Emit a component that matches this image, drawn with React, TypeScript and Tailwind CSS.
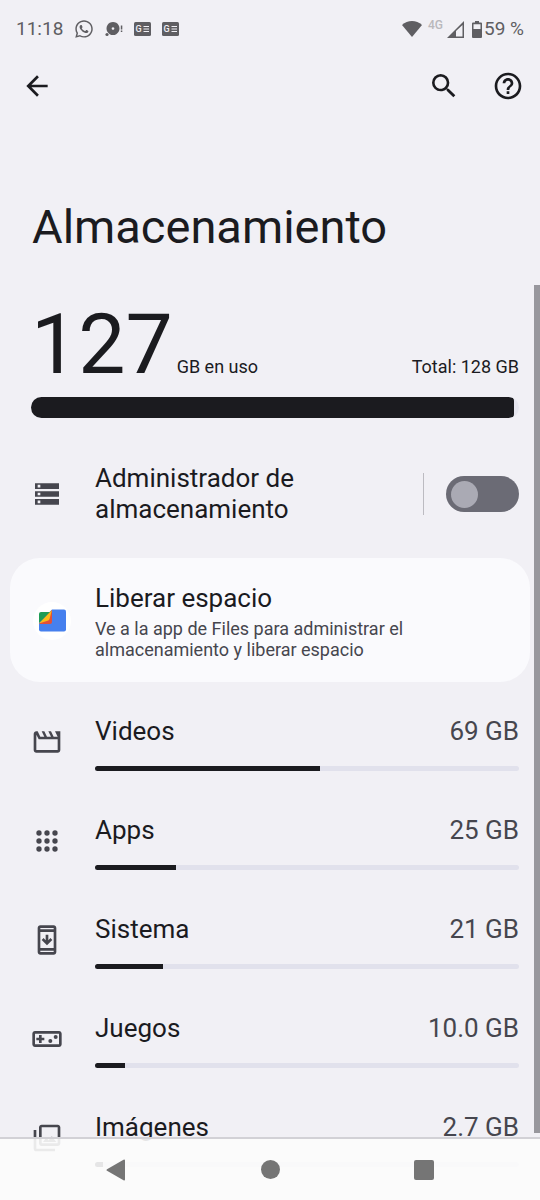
import React, { useState } from 'react';
import { FaWhatsapp } from 'react-icons/fa';
import { MdArrowBack, MdHelpOutline, MdSearch } from 'react-icons/md';

interface Category {
    name: string;
    size: string;
    percent: number;
    icon: React.ReactNode;
}

const Icon: React.FC<{ children: React.ReactNode }> = ({ children }) => (
    <svg viewBox="0 0 24 24" className="w-8 h-8" fill="currentColor" aria-hidden="true">
        {children}
    </svg>
);

const StorageIcon = () => (
    <Icon>
        <path fillRule="evenodd" d="M3 4h18v4.2H3zM5 5.1v2h2v-2zM3 9.9h18v4.2H3zM5 11v2h2v-2zM3 15.8h18V20H3zM5 16.9v2h2v-2z" />
    </Icon>
);

const MovieIcon = () => (
    <Icon>
        <path d="M4 6.47 5.76 10H20v8H4V6.47M22 4h-4l2 4h-3l-2-4h-2l2 4h-3l-2-4H8l2 4H7L5 4H4c-1.1 0-1.99.9-1.99 2L2 18c0 1.1.9 2 2 2h16c1.1 0 2-.9 2-2V4z" />
    </Icon>
);

const AppsIcon = () => (
    <Icon>
        {[6, 12, 18].map((y) => [6, 12, 18].map((x) => <circle key={`${x}-${y}`} cx={x} cy={y} r="2" />))}
    </Icon>
);

const SystemIcon = () => (
    <Icon>
        <path fillRule="evenodd" d="M17 1H7c-1.1 0-2 .9-2 2v18c0 1.1.9 2 2 2h10c1.1 0 2-.9 2-2V3c0-1.1-.9-2-2-2zM17 21H7v-1h10zM17 18H7V6h10zM7 4V3h10v1z" />
        <path d="M16 12l-1.41-1.41L13 12.17V8h-2v4.17l-1.59-1.58L8 12l4 4z" />
    </Icon>
);

const GamesIcon = () => (
    <Icon>
        <path fillRule="evenodd" d="M21 6H3c-1.1 0-2 .9-2 2v8c0 1.1.9 2 2 2h18c1.1 0 2-.9 2-2V8c0-1.1-.9-2-2-2zM21 16H3V8h18z" />
        <path d="M6 15h2v-2h2v-2H8V9H6v2H4v2h2z" />
        <circle cx="14.5" cy="13.5" r="1.5" />
        <circle cx="18.5" cy="10.5" r="1.5" />
    </Icon>
);

const ImagesIcon = () => (
    <Icon>
        <path d="M20 4v12H8V4h12m0-2H8c-1.1 0-2 .9-2 2v12c0 1.1.9 2 2 2h12c1.1 0 2-.9 2-2V4c0-1.1-.9-2-2-2zm-8.5 9.67l1.69 2.26 2.48-3.1L19 15H9zM2 6v14c0 1.1.9 2 2 2h14v-2H4V6H2z" />
    </Icon>
);

const FilesLogo = () => (
    <svg viewBox="0 0 42 42" className="w-[42px] h-[42px]" aria-hidden="true">
        <circle cx="21" cy="20" r="19" fill="#ffffff" />
        <path d="M21 8.500h12a2 2 0 0 1 2 2v18a2 2 0 0 1-2 2H10a2 2 0 0 1-2-2v-7z" fill="#4680ee" />
        <path d="M10 11h10L8 22v-9a2 2 0 0 1 2-2z" fill="#1e9c55" />
        <path d="M21 9v12a2 2 0 0 1-2 2H8z" fill="#e2503a" />
        <path d="M21 9l-2.500 9a2.500 2.500 0 0 1-2 1.700L8 22.500z" fill="#fbbc1a" />
    </svg>
);

const NewsIcon = () => (
    <svg viewBox="0 0 17 14" className="w-[17px] h-[14px]" aria-hidden="true">
        <rect width="17" height="14" rx="1.5" fill="#5f5e62" />
        <text x="1.5" y="10" fontSize="9" fontWeight="500" fill="#f1f0f5">G</text>
        <path d="M9.5 4.5H15M9.5 7H15M9.5 9.5H15" stroke="#f1f0f5" strokeWidth="1.2" />
    </svg>
);

const StatusBar = () => (
    <div className="flex h-[58px] items-center justify-between px-4 text-[19px] text-[#5f5e62]">
        <div className="flex items-center gap-[11px]">
            <span>11:18</span>
            <FaWhatsapp size={20} />
            <svg viewBox="0 0 18 18" className="w-[18px] h-[18px]" fill="currentColor" aria-hidden="true">
                <path fillRule="evenodd" d="M8 2a6.5 6.5 0 1 0 .01 0zM8 7.2a1.3 1.3 0 1 1-.01 0z" />
                <circle cx="2" cy="14.5" r="1.6" />
                <path d="M15.8 5.5h1.5v4h-1.5zM15.8 10.5h1.5v1.5h-1.5z" />
            </svg>
            <NewsIcon />
            <NewsIcon />
        </div>
        <div className="flex items-center">
            <svg viewBox="0 0 20 16" className="mr-1.5 w-5 h-4" fill="currentColor" aria-hidden="true">
                <path d="M10 16 0 4C5.5-1.2 14.5-1.2 20 4z" />
            </svg>
            <span className="mr-1 mb-2 text-[12px] leading-3 font-medium text-[#b9b8bc]">4G</span>
            <svg viewBox="0 0 17 17" className="mr-2 w-[17px] h-[17px]" aria-hidden="true">
                <path fill="currentColor" fillRule="evenodd" d="M17 0v17H0zM9 10v5.5h6.5V4z" />
            </svg>
            <svg viewBox="0 0 10 17" className="mr-0.5 w-[10px] h-[17px]" aria-hidden="true">
                <path fill="currentColor" fillRule="evenodd" d="M3 0h4v1.5h2a1 1 0 0 1 1 1V16a1 1 0 0 1-1 1H1a1 1 0 0 1-1-1V2.5a1 1 0 0 1 1-1h2zM1.5 3.2v4.800h7V3.2z" />
            </svg>
            <span>59 %</span>
        </div>
    </div>
);

const categories: Category[] = [
    { name: 'Videos', size: '69 GB', percent: 53, icon: <MovieIcon /> },
    { name: 'Apps', size: '25 GB', percent: 19, icon: <AppsIcon /> },
    { name: 'Sistema', size: '21 GB', percent: 16, icon: <SystemIcon /> },
    { name: 'Juegos', size: '10.0 GB', percent: 7, icon: <GamesIcon /> },
    { name: 'Imágenes', size: '2.7 GB', percent: 2, icon: <ImagesIcon /> },
];

const CategoryRow: React.FC<{ category: Category }> = ({ category }) => (
    <button className="flex w-full items-start text-left">
        <span className="mt-2.5 w-16 shrink-0 text-[#46464e]">{category.icon}</span>
        <span className="flex-1">
            <span className="flex justify-between text-[26px] leading-[31px]">
                <span>{category.name}</span>
                <span className="text-[#46464e]">{category.size}</span>
            </span>
            <span className="mt-[19px] block h-[5px] overflow-hidden rounded-full bg-[#e1e1ec]">
                <span className="block h-full bg-[#1b1b1f]" style={{ width: `${category.percent}%` }} />
            </span>
        </span>
    </button>
);

const App: React.FC = () => {
    const [managed, setManaged] = useState(false);

    return (
        <div className="relative flex h-screen flex-col overflow-hidden bg-[#f1f0f5] font-[Roboto,sans-serif] text-[#1b1b1f]">
            <StatusBar />

            <header className="flex h-14 items-center justify-between pr-4 pl-[21px]">
                <button aria-label="Atrás"><MdArrowBack size={32} /></button>
                <div className="flex gap-8">
                    <button aria-label="Buscar"><MdSearch size={32} /></button>
                    <button aria-label="Ayuda"><MdHelpOutline size={32} /></button>
                </div>
            </header>

            <main className="min-h-0 flex-1 overflow-y-auto pb-24 [scrollbar-width:none]">
                <h1 className="mt-[85px] px-8 text-[47px] leading-[56px]">Almacenamiento</h1>

                <section className="mt-12 pr-[21px] pl-[31px]">
                    <div className="flex items-baseline">
                        <span className="text-[84px] leading-[84px]">127</span>
                        <span className="ml-1 flex-1 text-[18px]">GB en uso</span>
                        <span className="text-[18px]">Total: 128 GB</span>
                    </div>
                    <div className="mt-[10px] h-[21px] overflow-hidden rounded-full bg-[#e6e6ef]">
                        <div className="h-full w-[99%] rounded-r bg-[#1b1b1f]" />
                    </div>
                </section>

                <section className="mt-[45px] flex items-center pr-[21px] pl-[31px]">
                    <button className="flex flex-1 items-center text-left">
                        <span className="w-16 shrink-0 text-[#46464e]"><StorageIcon /></span>
                        <span id="manager" className="flex-1 text-[26px] leading-[31px]">Administrador de almacenamiento</span>
                    </button>
                    <span className="mr-[22px] h-[42px] w-px bg-[#bcbbc1]" />
                    <input
                        type="checkbox"
                        role="switch"
                        aria-labelledby="manager"
                        checked={managed}
                        onChange={(e) => setManaged(e.target.checked)}
                        className="flex h-9 w-[73px] appearance-none items-center rounded-full bg-[#6b6b75] px-[5px] before:h-[27px] before:w-[27px] before:rounded-full before:bg-[#aaaab4] checked:justify-end"
                    />
                </section>

                <a href="#files" className="mx-[10px] mt-[33px] flex items-center rounded-[30px] bg-[#fafafd] pt-[25px] pr-[11px] pb-[22px] pl-[21px]">
                    <span className="w-16 shrink-0"><FilesLogo /></span>
                    <span className="flex-1">
                        <span className="block text-[26px] leading-[31px]">Liberar espacio</span>
                        <span className="mt-1 block text-[18px] leading-[21px] text-[#46464e]">
                            Ve a la app de Files para administrar el almacenamiento y liberar espacio
                        </span>
                    </span>
                </a>

                <section className="mt-[34px] flex flex-col gap-11 pr-[21px] pl-[31px]">
                    {categories.map((category) => (
                        <CategoryRow key={category.name} category={category} />
                    ))}
                </section>
            </main>

            <div className="absolute top-[285px] right-0 bottom-[67px] w-[6px] bg-[#98979d]" />

            <nav className="absolute inset-x-0 bottom-0 flex h-[63px] items-center justify-between border-t-2 border-[#d2d1d6] bg-[#fcfcfc]/90 px-[106px] text-[#757575]">
                <button aria-label="Volver">
                    <svg viewBox="0 0 20 22" className="w-5 h-[22px]" fill="currentColor" aria-hidden="true">
                        <path d="M19 1.5v19a1 1 0 0 1-1.5.8L1 11.8a1 1 0 0 1 0-1.6L17.5.7a1 1 0 0 1 1.5.8z" />
                    </svg>
                </button>
                <button aria-label="Inicio" className="h-[19px] w-[19px] rounded-full bg-[#757575]" />
                <button aria-label="Recientes" className="h-5 w-5 rounded-xs bg-[#757575]" />
            </nav>
        </div>
    );
};

export default App;
